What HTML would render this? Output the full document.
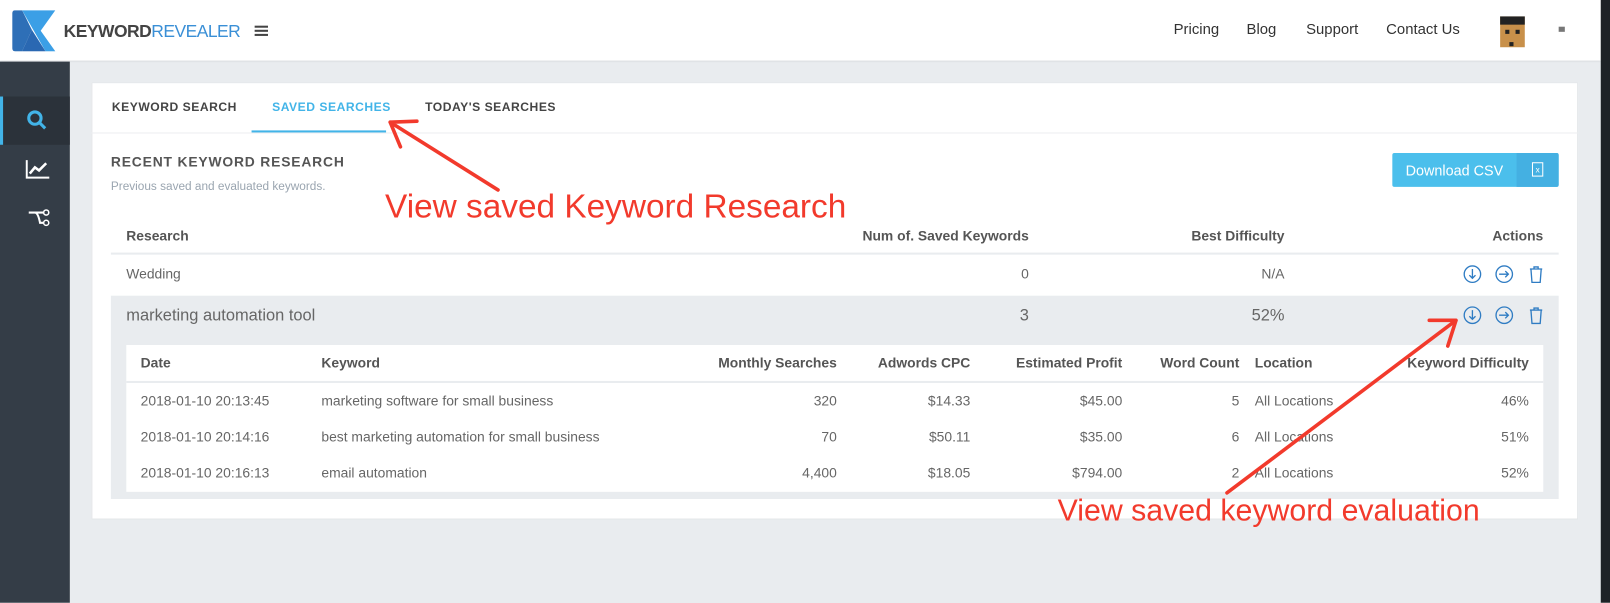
<!DOCTYPE html>
<html><head><meta charset="utf-8"><style>
*{box-sizing:border-box;margin:0;padding:0}
body{width:1610px;height:587px;background:#e9ecef;font-family:"Liberation Sans",sans-serif;position:relative;overflow:hidden;color:#555}
#w{position:absolute;left:0;top:0;width:1568px;height:572px;transform:scale(1.02679);transform-origin:0 0}
.a{position:absolute;white-space:nowrap}
.hdr{position:absolute;left:0;top:0;width:1559px;height:59px;background:#fff;box-shadow:0 1px 2px rgba(0,0,0,.1)}
.side{position:absolute;left:0;top:60px;width:68px;height:527px;background:#343d47}
.card{position:absolute;left:89px;top:80px;width:1448px;height:426px;background:#fff;border:1px solid #e3e6e9}
.th{font-weight:bold;font-size:13.5px;color:#555}
.td{font-size:13.5px;color:#666}
.r{text-align:right}
.red{color:#f23a2c;font-size:32.5px}
.tab{font-size:11.8px;font-weight:bold;letter-spacing:.5px;color:#444}
</style></head><body><div id="w">
<div class="hdr"></div>
<svg class="a" style="left:10px;top:10px" width="44" height="40" viewBox="0 0 46 42">
<path d="M2 3 Q2 0 5 0 H12 L22 20 L12 42 H5 Q2 42 2 39Z" fill="#2e6fb7"/>
<path d="M12 0 H46 L31 21 L46 42 H36 L12 0Z" fill="#3b9fe6"/>
<path d="M22 20 L36 42 H12Z" fill="#2a68b2"/>
</svg>
<div class="a" style="left:62px;top:21px;font-size:17px;letter-spacing:-.5px"><b style="color:#444">KEYWORD</b><span style="color:#3a8fd6">REVEALER</span></div>
<div class="a" style="left:248px;top:25px;width:13px;height:2px;background:#444;box-shadow:0 4px 0 #444,0 8px 0 #444"></div>
<div class="a" style="left:1143px;top:21px;font-size:14.5px;color:#333">Pricing</div>
<div class="a" style="left:1214px;top:21px;font-size:14.5px;color:#333">Blog</div>
<div class="a" style="left:1272px;top:21px;font-size:14.5px;color:#333">Support</div>
<div class="a" style="left:1350px;top:21px;font-size:14.5px;color:#333">Contact Us</div>
<div class="a" style="left:1461px;top:16px;width:24px;height:30px;background:#c8904a;border-top:8px solid #222"></div>
<div class="a" style="left:1466px;top:29px;width:4px;height:4px;background:#222;box-shadow:10px 0 0 #222,4px 12px 0 #222"></div>
<div class="a" style="left:1518px;top:26px;width:6px;height:5px;background:#777"></div>
<div class="a" style="left:1559px;top:0;width:12px;height:587px;background:#1e2226"></div>
<div class="side"></div>
<div class="a" style="left:0;top:94px;width:68px;height:47px;background:#2b323a;border-left:3px solid #42b4e8"></div>
<svg class="a" style="left:25px;top:106px" width="22" height="22" viewBox="0 0 22 22"><circle cx="9" cy="9" r="6" stroke="#42b4e8" stroke-width="3" fill="none"/><path d="M13 13L19 19" stroke="#42b4e8" stroke-width="3"/></svg>
<svg class="a" style="left:25px;top:155px" width="24" height="20" viewBox="0 0 24 20"><path d="M1 1V18H23" stroke="#fff" stroke-width="2" fill="none"/><path d="M4 14L9 8L13 11L20 4" stroke="#fff" stroke-width="2.5" fill="none"/></svg>
<svg class="a" style="left:25px;top:203px" width="24" height="20" viewBox="0 0 24 20"><path d="M3 4H20M9 4Q12 4 14 14H20" stroke="#fff" stroke-width="2" fill="none"/><circle cx="20" cy="4" r="2.5" stroke="#fff" fill="#343d47" stroke-width="1.5"/><circle cx="20" cy="14" r="2.5" stroke="#fff" fill="#343d47" stroke-width="1.5"/></svg>
<div class="card"></div>
<div class="a" style="left:89px;top:129px;width:1448px;height:1px;background:#eceef0"></div>
<div class="a" style="left:245px;top:127px;width:131px;height:2px;background:#42b4e8"></div>
<div class="a tab" style="left:109px;top:97px">KEYWORD SEARCH</div>
<div class="a tab" style="left:265px;top:97px;color:#42b4e8">SAVED SEARCHES</div>
<div class="a tab" style="left:414px;top:97px">TODAY'S SEARCHES</div>
<div class="a" style="left:108px;top:150px;font-size:13.5px;font-weight:bold;letter-spacing:.8px;color:#555">RECENT KEYWORD RESEARCH</div>
<div class="a" style="left:108px;top:176px;font-size:11.5px;color:#9aa5b0">Previous saved and evaluated keywords.</div>
<div class="a" style="left:1356px;top:149px;width:162px;height:33px;background:#4bbfec;border-radius:2px"></div>
<div class="a" style="left:1477px;top:149px;width:41px;height:33px;background:#44b0e2;border-radius:0 2px 2px 0"></div>
<div class="a" style="left:1369px;top:158px;font-size:14px;color:#fff">Download CSV</div>
<div class="a" style="left:1492px;top:158px;width:11px;height:14px;border:1px solid #fff;font-size:8px;color:#fff;text-align:center;line-height:13px">x</div>
<div class="a th" style="left:123px;top:222px">Research</div>
<div class="a th r" style="left:800px;top:222px;width:202px">Num of. Saved Keywords</div>
<div class="a th r" style="left:1100px;top:222px;width:151px">Best Difficulty</div>
<div class="a th r" style="left:1400px;top:222px;width:103px">Actions</div>
<div class="a" style="left:108px;top:246px;width:1410px;height:2px;background:#e9ecef"></div>
<div class="a td" style="left:123px;top:259px">Wedding</div>
<div class="a td r" style="left:900px;top:259px;width:102px">0</div>
<div class="a td r" style="left:1150px;top:259px;width:101px">N/A</div>
<div class="a" style="left:108px;top:288px;width:1410px;height:198px;background:#e9ecef"></div>
<div class="a" style="left:123px;top:299px;font-size:16px;color:#666">marketing automation tool</div>
<div class="a r" style="left:900px;top:299px;width:102px;font-size:16px;color:#666">3</div>
<div class="a r" style="left:1150px;top:299px;width:101px;font-size:16px;color:#666">52%</div>
<svg class="a" style="left:1424px;top:257px" width="82" height="60" viewBox="0 0 82 60">
<g stroke="#2f7cc3" stroke-width="1.3" fill="none">
<circle cx="10" cy="10" r="8"/><path d="M10 5V14M7 11L10 14L13 11"/>
<circle cx="41" cy="10" r="8"/><path d="M36 10H45M42 7L45 10L42 13"/>
<path d="M66 5H78M70 5V3H74V5M67 5L68 18H76L77 5"/>
<circle cx="10" cy="50" r="8"/><path d="M10 45V54M7 51L10 54L13 51"/>
<circle cx="41" cy="50" r="8"/><path d="M36 50H45M42 47L45 50L42 53"/>
<path d="M66 45H78M70 45V43H74V45M67 45L68 58H76L77 45"/>
</g></svg>
<div class="a" style="left:123px;top:336px;width:1380px;height:143px;background:#fff"></div>
<div class="a" style="left:123px;top:371px;width:1380px;height:2px;background:#e9ecef"></div>
<div class="a th" style="left:137px;top:346px">Date</div>
<div class="a th" style="left:313px;top:346px">Keyword</div>
<div class="a th r" style="left:615px;top:346px;width:200px">Monthly Searches</div>
<div class="a th r" style="left:800px;top:346px;width:145px">Adwords CPC</div>
<div class="a th r" style="left:950px;top:346px;width:143px">Estimated Profit</div>
<div class="a th r" style="left:1100px;top:346px;width:107px">Word Count</div>
<div class="a th" style="left:1222px;top:346px">Location</div>
<div class="a th r" style="left:1300px;top:346px;width:189px">Keyword Difficulty</div>

<div class="a td" style="left:137px;top:383px">2018-01-10 20:13:45</div>
<div class="a td" style="left:313px;top:383px">marketing software for small business</div>
<div class="a td r" style="left:715px;top:383px;width:100px">320</div>
<div class="a td r" style="left:845px;top:383px;width:100px">$14.33</div>
<div class="a td r" style="left:993px;top:383px;width:100px">$45.00</div>
<div class="a td r" style="left:1107px;top:383px;width:100px">5</div>
<div class="a td" style="left:1222px;top:383px">All Locations</div>
<div class="a td r" style="left:1389px;top:383px;width:100px">46%</div>

<div class="a td" style="left:137px;top:418px">2018-01-10 20:14:16</div>
<div class="a td" style="left:313px;top:418px">best marketing automation for small business</div>
<div class="a td r" style="left:715px;top:418px;width:100px">70</div>
<div class="a td r" style="left:845px;top:418px;width:100px">$50.11</div>
<div class="a td r" style="left:993px;top:418px;width:100px">$35.00</div>
<div class="a td r" style="left:1107px;top:418px;width:100px">6</div>
<div class="a td" style="left:1222px;top:418px">All Locations</div>
<div class="a td r" style="left:1389px;top:418px;width:100px">51%</div>

<div class="a td" style="left:137px;top:453px">2018-01-10 20:16:13</div>
<div class="a td" style="left:313px;top:453px">email automation</div>
<div class="a td r" style="left:715px;top:453px;width:100px">4,400</div>
<div class="a td r" style="left:845px;top:453px;width:100px">$18.05</div>
<div class="a td r" style="left:993px;top:453px;width:100px">$794.00</div>
<div class="a td r" style="left:1107px;top:453px;width:100px">2</div>
<div class="a td" style="left:1222px;top:453px">All Locations</div>
<div class="a td r" style="left:1389px;top:453px;width:100px">52%</div>

<svg class="a" style="left:0;top:0" width="1610" height="587">
<g stroke="#f23a2c" stroke-width="3.5" fill="none" stroke-linecap="round" stroke-linejoin="round">
<path d="M485 185L380 119M380 119L406 118M380 119L390 143"/>
<path d="M1195 480L1418 312M1418 312L1392 312M1418 312L1410 337"/>
</g></svg>
<div class="a red" style="left:375px;top:183px">View saved Keyword Research</div>
<div class="a red" style="left:1030px;top:481px;font-size:29.5px">View saved keyword evaluation</div>
</div></body></html>
